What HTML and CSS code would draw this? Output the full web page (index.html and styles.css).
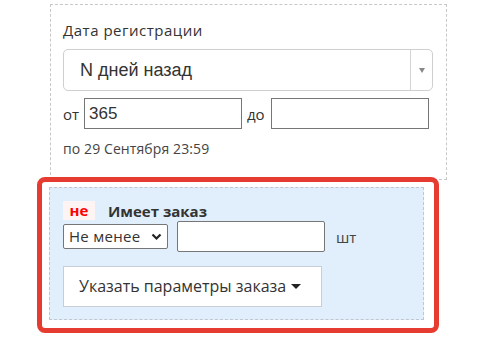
FILE: index.html
```html
<!DOCTYPE html>
<html lang="ru">
<head>
<meta charset="utf-8">
<link rel="stylesheet" href="styles.css">
</head>
<body>
<div class="page">
  <div class="filter">
    <div class="label">Дата регистрации</div>
    <div class="chosen">
      <span class="chosen-text">N дней назад</span>
      <span class="chosen-arrow"><span class="tri"></span></span>
    </div>
    <div class="range">
      <span class="rl">от</span>
      <span class="inp">365</span>
      <span class="rl rl2">до</span>
      <span class="inp"></span>
    </div>
    <div class="hint">по 29 Сентября 23:59</div>
  </div>

  <div class="order">
    <div class="order-head">
      <span class="neg">не</span>
      <span class="title">Имеет заказ</span>
    </div>
    <div class="order-row">
      <span class="sel">Не менее
        <svg class="chev" width="11" height="8" viewBox="0 0 11 8"><path d="M1.5 1.5 L5.5 5.5 L9.5 1.5" fill="none" stroke="#222" stroke-width="2.2"/></svg>
      </span>
      <span class="num"></span>
      <span class="unit">шт</span>
    </div>
    <div class="btn">Указать параметры заказа <span class="caret"></span></div>
  </div>

  <div class="highlight"></div>
</div>
</body>
</html>
```

FILE: styles.css
```css
html, body {
  margin: 0;
  padding: 0;
  background: #fff;
}
body {
  font-family: "Open Sans", "Liberation Sans", Arial, sans-serif;
  color: #333;
}
.page {
  position: relative;
  width: 498px;
  height: 338px;
  padding-top: 4px;
  box-sizing: border-box;
}
.filter {
  margin-left: 50px;
  width: 397px;
  height: 176px;
  box-sizing: border-box;
  border: 1px dashed #c8c8c8;
  padding: 15px 0 0 12px;
}
.label {
  font-size: 15px;
  line-height: 20px;
  letter-spacing: 0.5px;
  color: #333;
}
.chosen {
  margin-top: 9px;
  width: 370px;
  height: 42px;
  box-sizing: border-box;
  border: 1px solid #cfcfcf;
  border-radius: 5px;
  display: flex;
  align-items: stretch;
}
.chosen-text {
  flex: 1;
  padding-left: 16px;
  font-family: "Liberation Sans", Arial, sans-serif;
  font-size: 18px;
  line-height: 40px;
  color: #333;
}
.chosen-arrow {
  width: 21px;
  border-left: 1px solid #d4d4d4;
  display: flex;
  align-items: center;
  justify-content: center;
}
.tri {
  width: 0;
  height: 0;
  border-left: 3.5px solid transparent;
  border-right: 3.5px solid transparent;
  border-top: 5px solid #888;
}
.range {
  margin-top: 7px;
  display: flex;
  align-items: center;
  height: 31px;
}
.rl {
  font-size: 15px;
  color: #333;
  width: 21px;
}
.rl2 {
  width: 24px;
  margin-left: 5px;
}
.inp {
  width: 158px;
  height: 31px;
  box-sizing: border-box;
  border: 1px solid #767676;
  font-family: "Liberation Sans", Arial, sans-serif;
  font-size: 17px;
  line-height: 29px;
  padding-left: 4px;
  color: #333;
}
.hint {
  margin-top: 9px;
  font-size: 14px;
  line-height: 22px;
  letter-spacing: 0.1px;
  color: #444;
}
.order {
  margin-top: 7px;
  margin-left: 49px;
  width: 375px;
  height: 133px;
  box-sizing: border-box;
  background: #e1eefc;
  border: 1px dashed #bfc6cf;
  padding: 13px 0 0 13px;
}
.order-head {
  display: flex;
  align-items: center;
  height: 19px;
}
.neg {
  width: 32px;
  height: 19px;
  background: #fff4f4;
  color: #f00;
  font-weight: 700;
  font-size: 15px;
  line-height: 19px;
  text-align: center;
}
.title {
  margin-left: 13px;
  font-weight: 700;
  font-size: 15px;
  color: #333;
}
.order-row {
  margin-top: 1px;
  display: flex;
  align-items: center;
  height: 31px;
}
.sel {
  width: 105px;
  height: 25px;
  box-sizing: border-box;
  border: 1px solid #767676;
  border-radius: 2px;
  background: #fff;
  font-size: 15px;
  line-height: 23px;
  letter-spacing: 0.3px;
  padding-left: 5px;
  display: flex;
  align-items: center;
  justify-content: space-between;
  padding-right: 5px;
}
.chev {
  display: block;
}
.num {
  margin-left: 9px;
  width: 148px;
  height: 31px;
  box-sizing: border-box;
  border: 1px solid #767676;
  border-radius: 2px;
  background: #fff;
}
.unit {
  margin-left: 11px;
  font-size: 15px;
  color: #444;
}
.btn {
  margin-top: 14px;
  width: 259px;
  height: 41px;
  box-sizing: border-box;
  border: 1px solid #c9ced6;
  background: #fff;
  font-size: 16px;
  line-height: 39px;
  padding-left: 15px;
  color: #333;
  display: flex;
  align-items: center;
}
.caret {
  display: inline-block;
  margin-left: 5px;
  width: 0;
  height: 0;
  border-left: 5px solid transparent;
  border-right: 5px solid transparent;
  border-top: 5px solid #222;
}
.highlight {
  position: absolute;
  left: 37px;
  top: 177px;
  width: 402px;
  height: 156px;
  box-sizing: border-box;
  border: 5px solid #e53b30;
  border-radius: 8px;
  pointer-events: none;
}
```
